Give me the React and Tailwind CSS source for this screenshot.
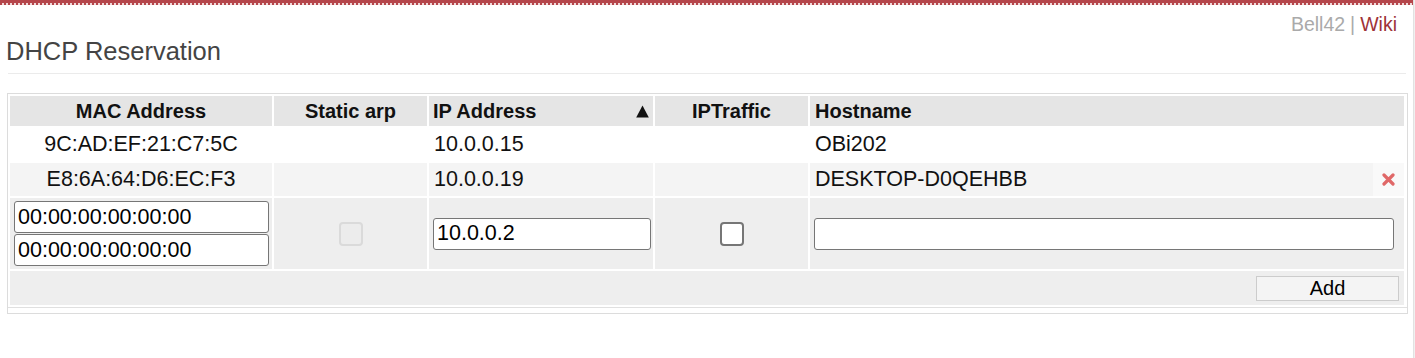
export default function App() {
  return (
    <div className="w-[1415px] h-[358px] bg-[#f0f0f0] font-['Liberation_Sans',Arial,sans-serif] text-[#111] flex overflow-hidden">
      <div className="w-[1414px] h-full bg-white border-r border-[#e2e2e2]">
        <div className="h-[3px] bg-[#b5464b]" />
        <div className="h-[2px] bg-[repeating-linear-gradient(90deg,#b5464b_0px,#b5464b_2px,#f1d9d9_2px,#f1d9d9_4px)]" />
        <div className="pt-[8px] pr-[16px] flex justify-end leading-[22px] text-[19.5px]">
          <span className="text-[#aaaaaa]">Bell42</span>
          <span className="text-[#aaaaaa] px-[5px]">|</span>
          <span className="text-[#9e3238]">Wiki</span>
        </div>
        <div className="mt-[1px] pl-[6px] text-[25.5px] leading-[30px] text-[#444]">DHCP Reservation</div>
        <div className="mt-[7px] ml-[8px] w-[1398px] border-t border-[#ebebeb]" />
        <div className="mt-[19px] ml-[7px] w-[1401px] border border-[#dcdcdc] pb-[5px]">
          <div className="border-b border-[#e0e0e0]">
            <table className="table-fixed border-separate border-spacing-[2px] w-[1398px]">
              <thead>
                <tr className="bg-[#e5e5e5] text-[20px] font-bold">
                  <th className="p-0 h-[30px] w-[262px] text-center">MAC Address</th>
                  <th className="p-0 h-[30px] w-[153px] text-center">Static arp</th>
                  <th className="p-0 h-[30px] w-[224px] text-left">
                    <div className="flex justify-between items-center pl-[4px] pr-[4px]">
                      <span>IP Address</span>
                      <svg width="13" height="13" viewBox="0 0 13 13" className="mr-[0px]">
                        <polygon points="6.5,0.5 12.8,12.5 0.2,12.5" fill="#111" />
                      </svg>
                    </div>
                  </th>
                  <th className="p-0 h-[30px] w-[153px] text-center">IPTraffic</th>
                  <th className="p-0 h-[30px] text-left pl-[5px]">Hostname</th>
                </tr>
              </thead>
              <tbody className="text-[21.5px]">
                <tr className="bg-white">
                  <td className="p-0 h-[33px] text-center">9C:AD:EF:21:C7:5C</td>
                  <td className="p-0 h-[33px]" />
                  <td className="p-0 h-[33px] pl-[5px]">10.0.0.15</td>
                  <td className="p-0 h-[33px]" />
                  <td className="p-0 h-[33px] pl-[5px]">OBi202</td>
                </tr>
                <tr className="bg-[#f4f4f4]">
                  <td className="p-0 h-[33px] text-center">E8:6A:64:D6:EC:F3</td>
                  <td className="p-0 h-[33px]" />
                  <td className="p-0 h-[33px] pl-[5px]">10.0.0.19</td>
                  <td className="p-0 h-[33px]" />
                  <td className="p-0 h-[33px] pl-[5px] relative">
                    DESKTOP-D0QEHBB
                    <div className="absolute right-0 top-0 bottom-0 w-[31px] bg-[#f9f9f9] flex items-center justify-center">
                      <svg width="13" height="13" viewBox="0 0 13 13">
                        <path d="M2 2 L11 11 M11 2 L2 11" stroke="#e06868" strokeWidth="3.2" strokeLinecap="round" />
                      </svg>
                    </div>
                  </td>
                </tr>
                <tr className="bg-[#eeeeee]">
                  <td className="p-0 h-[71px] pl-[4px] pr-[3px]">
                    <div className="flex flex-col gap-[1px]">
                      <input
                        readOnly
                        value="00:00:00:00:00:00"
                        className="w-[255px] h-[32px] border border-[#767676] rounded-[3px] bg-white px-[3px] text-[21.5px] text-black outline-none"
                      />
                      <input
                        readOnly
                        value="00:00:00:00:00:00"
                        className="w-[255px] h-[32px] border border-[#767676] rounded-[3px] bg-white px-[3px] text-[21.5px] text-black outline-none"
                      />
                    </div>
                  </td>
                  <td className="p-0 h-[71px]">
                    <div className="flex justify-center">
                      <div className="w-[24px] h-[24px] rounded-[4px] border-2 border-[#dadada] bg-[#ececec]" />
                    </div>
                  </td>
                  <td className="p-0 h-[71px] pl-[4px]">
                    <input
                      readOnly
                      value="10.0.0.2"
                      className="w-[218px] h-[32px] border border-[#767676] rounded-[3px] bg-white px-[3px] text-[21.5px] text-black outline-none"
                    />
                  </td>
                  <td className="p-0 h-[71px]">
                    <div className="flex justify-center">
                      <div className="w-[24px] h-[24px] rounded-[4px] border-[2.5px] border-[#767676] bg-white" />
                    </div>
                  </td>
                  <td className="p-0 h-[71px] pl-[4px]">
                    <input
                      readOnly
                      value=""
                      className="w-[580px] h-[32px] border border-[#767676] rounded-[3px] bg-white px-[3px] text-[21.5px] text-black outline-none"
                    />
                  </td>
                </tr>
                <tr className="bg-[#eeeeee]">
                  <td colSpan={5} className="p-0 h-[34px] pr-[5px]">
                    <div className="flex justify-end">
                      <button className="w-[143px] h-[25px] border border-[#cccccc] bg-[#f4f4f4] text-[20px] leading-[23px] text-black">
                        Add
                      </button>
                    </div>
                  </td>
                </tr>
              </tbody>
            </table>
          </div>
        </div>
      </div>
    </div>
  );
}
